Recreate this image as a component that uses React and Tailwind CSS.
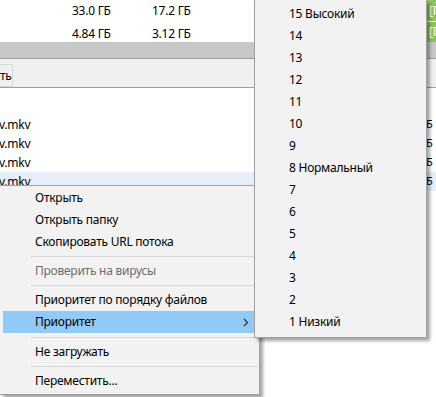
import React from 'react';

const priorities = [
  '15 Высокий', '14', '13', '12', '11', '10', '9', '8 Нормальный',
  '7', '6', '5', '4', '3', '2', '1 Низкий',
];

const Item = ({ children, disabled, active, arrow }) => (
  <div
    className={`relative h-[22px] flex items-center pl-[32px] ${
      active ? 'bg-[#91c9f7]' : ''
    } ${disabled ? 'text-[#6d6d6d]' : 'text-black'}`}
  >
    {children}
    {arrow && (
      <svg className="absolute left-[240px] top-[7px]" width="6" height="9" viewBox="0 0 6 9">
        <path d="M1 1l3.5 3.5L1 8" fill="none" stroke="#333" strokeWidth="1.2" />
      </svg>
    )}
  </div>
);

const Sep = ({ h = 'h-[7px]' }) => (
  <div className={`${h} flex items-center pl-[28px]`}>
    <div className="h-px w-full bg-[#d7d7d7]" />
  </div>
);

const TopRow = ({ a, b, h, pt }) => (
  <div className={`flex ${h}`}>
    <div className={`flex-1 flex items-center ${pt}`}>
      <span className="ml-[72px] w-[80px]">{a}</span>
      <span>{b}</span>
    </div>
    <div className="w-[10px] shrink-0 bg-[#8cc55a] text-white pl-[3px] flex items-center overflow-hidden whitespace-nowrap">
      [П
    </div>
  </div>
);

export default function App() {
  return (
    <div
      className="relative w-[436px] h-[397px] overflow-hidden bg-white text-[12px] tracking-[-0.25px] text-black"
      style={{ fontFamily: '"Noto Sans", "Open Sans", sans-serif' }}
    >
      {/* top table rows */}
      <TopRow a="33.0 ГБ" b="17.2 ГБ" h="h-[21px]" pt="pt-0" />
      <div className="h-px bg-white" />
      <TopRow a="4.84 ГБ" b="3.12 ГБ" h="h-[20px]" pt="pt-[4px]" />
      <div className="h-[16px] bg-[#c8c8c8]" />
      <div className="h-px bg-[#a0a0a0]" />
      <div className="h-[28px] bg-[#f0f0f0] flex items-end">
        <div className="h-[23px] w-[13px] border border-l-0 border-[#d9d9d9] bg-[#f0f0f0] leading-[21px] overflow-hidden whitespace-nowrap">
          ть
        </div>
      </div>
      <div className="h-px bg-[#a0a0a0]" />

      {/* file list */}
      <div className="pt-[27px]">
        {['v.mkv', 'v.mkv', 'v.mkv', 'v.mkv'].map((name, i) => (
          <div
            key={i}
            className={`h-[19px] flex items-center ${i === 3 ? 'bg-[#e5eef9]' : ''}`}
          >
            <span className="ml-[-1px]">{name}</span>
            <span className="ml-auto w-[10px] overflow-hidden text-[11px]">Б</span>
          </div>
        ))}
      </div>

      {/* context menu */}
      <div className="absolute left-0 top-[185px] w-[260px] bg-[#f2f2f2] border border-l-0 border-[#a0a0a0] pl-[3px] pr-[2px] pt-px pb-[2px] shadow-[3px_3px_3px_rgba(0,0,0,0.35)] z-10">
        <Item>Открыть</Item>
        <Item>Открыть папку</Item>
        <Item>Скопировать URL потока</Item>
        <Sep />
        <Item disabled>Проверить на вирусы</Item>
        <Sep />
        <Item>Приоритет по порядку файлов</Item>
        <Item active arrow>Приоритет</Item>
        <Sep h="h-[8px]" />
        <Item>Не загружать</Item>
        <Sep />
        <Item>Переместить...</Item>
      </div>

      {/* priority submenu */}
      <div className="absolute left-[254px] top-0 w-[173px] bg-[#f2f2f2] border border-t-0 border-[#a0a0a0] pt-[3px] pb-[4px] pl-[2px] shadow-[3px_3px_3px_rgba(0,0,0,0.35)] z-20">
        {priorities.map((p) => (
          <div key={p} className="h-[22px] flex items-center pl-[32px]">
            {p}
          </div>
        ))}
      </div>
    </div>
  );
}
